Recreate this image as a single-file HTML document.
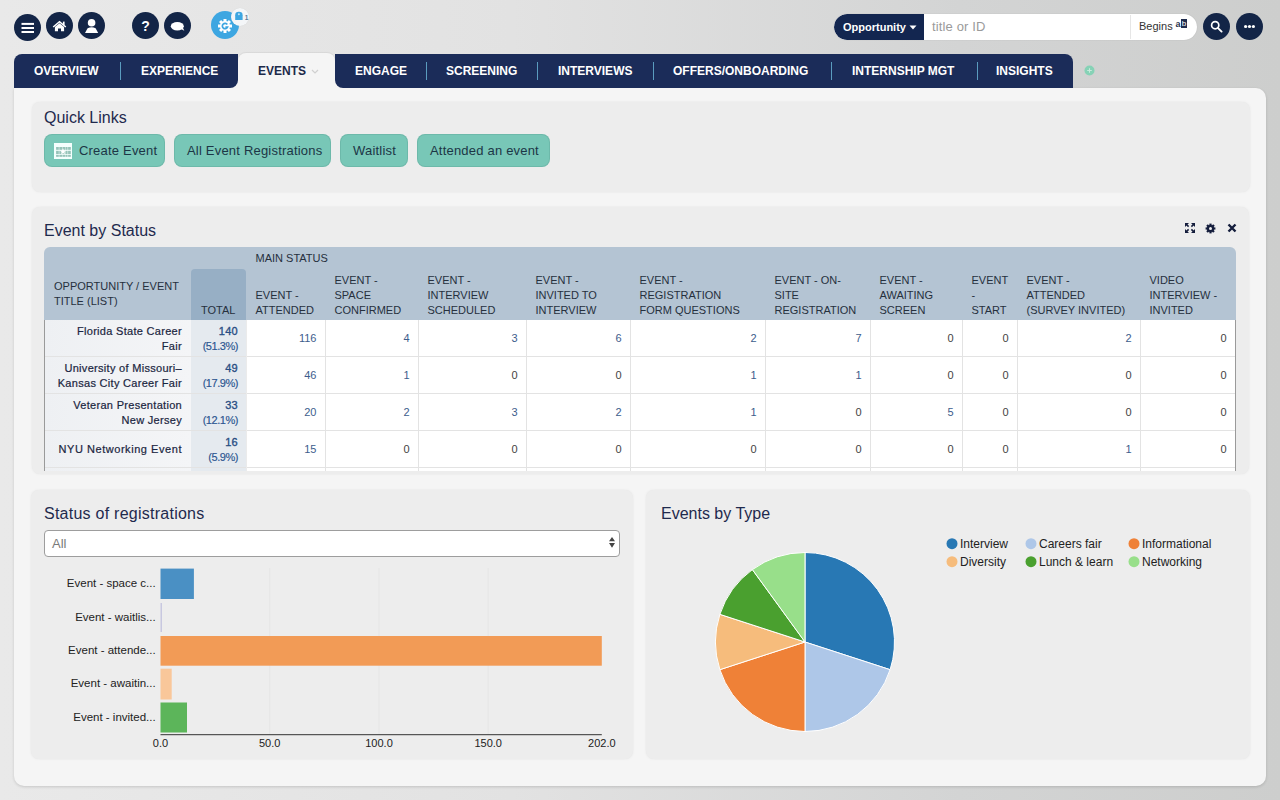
<!DOCTYPE html>
<html><head><meta charset="utf-8">
<style>
*{box-sizing:border-box;margin:0;padding:0}
html,body{width:1280px;height:800px;overflow:hidden}
body{font-family:"Liberation Sans",sans-serif;background:linear-gradient(to right,#e9e9e9 0%,#e2e2e2 40%,#d3d4d4 75%,#cdcecd 100%);position:relative;color:#1c2a4a}
.abs{position:absolute}
.circ{position:absolute;width:27px;height:27px;border-radius:50%;background:#132547}
#main{position:absolute;left:14px;top:88px;width:1252px;height:698px;background:#f5f5f5;border-radius:0 10px 10px 10px;box-shadow:0 1px 3px rgba(0,0,0,.15)}
.panel{position:absolute;background:#ededed;border-radius:8px;box-shadow:0 0 2px 0 rgba(225,225,225,.9)}
.ptitle{position:absolute;font-size:16px;color:#1f2a4d;white-space:nowrap}
/* tabs */
.tabgrp{position:absolute;top:53.75px;height:34.25px;background:#1b2c59}
.tab{position:absolute;top:0;height:35px;line-height:37px;color:#fff;font-size:12px;font-weight:700;white-space:nowrap}
.sep{position:absolute;top:9px;width:1px;height:18px;background:#5a9cbf}
.qbtn{position:absolute;top:134px;height:33px;background:#78c7b7;border-radius:8px;box-shadow:inset 0 0 0 1px rgba(60,120,110,.18)}
.qtxt{position:absolute;top:134px;height:33px;line-height:33px;font-size:13px;color:#1c3646;white-space:nowrap;letter-spacing:0.2px}
.th{position:absolute;font-size:11px;line-height:15px;color:#26303d;white-space:nowrap}
.td{position:absolute;font-size:11px;white-space:nowrap;text-align:right}
.name{color:#1a2540;letter-spacing:0.3px;-webkit-text-stroke:0.2px #1a2540}
.tot{color:#2b5590;line-height:15px;margin-right:-1px;letter-spacing:-0.45px;-webkit-text-stroke:0.15px #2b5590}
.tot b{letter-spacing:0.3px;font-weight:400;-webkit-text-stroke:0.35px #27497a}
.num{color:#3d5d8c;line-height:15px}
.num.z{color:#444}
</style></head>
<body>
<!-- top icons -->
<div class="circ" style="left:14px;top:14px"><svg width="27" height="27" viewBox="0 0 27 27"><rect x="7.5" y="8.9" width="12.5" height="2" fill="#fff"/><rect x="7.5" y="13" width="12.5" height="2" fill="#fff"/><rect x="7.5" y="17" width="12.5" height="2" fill="#fff"/></svg></div>
<div class="circ" style="left:46px;top:12px"><svg width="27" height="27" viewBox="0 0 27 27"><path d="M7.2 15 L13.5 9.7 L19.8 15" stroke="#fff" stroke-width="1.5" fill="none"/><rect x="16.9" y="9.6" width="1.7" height="3.4" fill="#fff"/><path d="M8.9 14.9 L13.5 11.2 L18.1 14.9 V19.3 H15 V16.4 H12 V19.3 H8.9 Z" fill="#fff"/></svg></div>
<div class="circ" style="left:78px;top:12px"><svg width="27" height="27" viewBox="0 0 27 27"><circle cx="13.6" cy="10.7" r="3.8" fill="#fff"/><path d="M7 21 L9.6 16.3 Q13.6 14 17.6 16.3 L20.2 21 Z" fill="#fff"/></svg></div>
<div class="circ" style="left:132px;top:12px"><svg width="27" height="27" viewBox="0 0 27 27"><text x="13.6" y="19.2" text-anchor="middle" font-family="Liberation Sans" font-weight="700" font-size="14" fill="#fff">?</text></svg></div>
<div class="circ" style="left:164px;top:12px"><svg width="27" height="27" viewBox="0 0 27 27"><ellipse cx="13.3" cy="14.3" rx="6.5" ry="4.2" fill="#fff"/><path d="M16 16.5 L20.3 18.8 L18.6 15 Z" fill="#fff"/></svg></div>
<div class="circ" style="left:211px;top:11px;width:28px;height:28px;background:#3da6e1"><svg width="28" height="28" viewBox="0 0 28 28"><g transform="translate(14 15)"><g fill="#fff"><circle r="5"/><rect x="-1.5" y="-7" width="3" height="14"/><rect x="-1.5" y="-7" width="3" height="14" transform="rotate(45)"/><rect x="-1.5" y="-7" width="3" height="14" transform="rotate(90)"/><rect x="-1.5" y="-7" width="3" height="14" transform="rotate(135)"/></g><path d="M2.3 -1.5 A2.7 2.7 0 1 0 2.5 1.1 H0.4" stroke="#3da6e1" stroke-width="1.7" fill="none"/></g></svg></div>
<div class="abs" style="left:231px;top:8px;width:18px;height:18px;border-radius:50%;background:#f4f6f8;box-shadow:0 0 1px rgba(0,0,0,.1)"><svg width="18" height="18" viewBox="0 0 18 18"><path d="M4.2 8 V7 A3.7 3.2 0 0 1 11.6 7 V8 Z" fill="#3da6e1"/><rect x="4.2" y="7.6" width="7.4" height="4.4" fill="#3da6e1"/><circle cx="7.9" cy="6.3" r="1" fill="#bfe2f6"/><text x="15.5" y="11.6" text-anchor="middle" font-family="Liberation Sans" font-size="6.5" fill="#5a7a96" font-weight="700">1</text></svg></div>

<!-- search -->
<div class="abs" style="left:834px;top:14px;width:363px;height:26px;border-radius:13px;background:#fff;overflow:hidden;box-shadow:0 0 1px rgba(0,0,0,.2)">
  <div class="abs" style="left:0;top:0;width:90px;height:26px;background:#132650;border-radius:13px 0 0 13px"></div>
  <div class="abs" style="left:9px;top:0;height:26px;line-height:26px;font-size:11px;font-weight:700;color:#fff;white-space:nowrap">Opportunity</div>
  <svg class="abs" style="left:75px;top:11px" width="8" height="5" viewBox="0 0 8 5"><path d="M0.5 0.5 H7.5 L4 4.5 Z" fill="#fff"/></svg>
  <div class="abs" style="left:98px;top:0;height:26px;line-height:26px;font-size:13px;color:#9a9a9a;white-space:nowrap;letter-spacing:0.15px">title or ID</div>
  <div class="abs" style="left:296px;top:1px;width:1px;height:24px;background:#e6e6e6"></div>
  <div class="abs" style="left:305px;top:-1px;height:26px;line-height:26px;font-size:11px;color:#333;white-space:nowrap">Begins</div>
  <div class="abs" style="left:341.5px;top:6px;font-size:9px;line-height:9px;color:#2a3550;font-weight:700;white-space:nowrap">a</div>
  <div class="abs" style="left:347px;top:5px;width:6px;height:9px;background:#1f2c4d;color:#fff;font-size:8px;line-height:9px;text-align:center">b</div>
</div>
<div class="circ" style="left:1203px;top:13px"><svg width="27" height="27" viewBox="0 0 27 27"><circle cx="12.2" cy="12.2" r="3.6" stroke="#fff" stroke-width="1.7" fill="none"/><path d="M14.8 14.8 L18.6 18.6" stroke="#fff" stroke-width="1.9" stroke-linecap="round"/></svg></div>
<div class="circ" style="left:1236px;top:13px"><svg width="27" height="27" viewBox="0 0 27 27"><circle cx="9.6" cy="13.5" r="1.6" fill="#fff"/><circle cx="13.5" cy="13.5" r="1.6" fill="#fff"/><circle cx="17.4" cy="13.5" r="1.6" fill="#fff"/></svg></div>

<!-- main -->
<div id="main"></div>

<!-- tabs -->
<div class="abs" style="left:226px;top:72px;width:120px;height:17px;background:#f5f5f5"></div>
<div class="tabgrp" style="left:14px;width:224px;border-radius:8px 0 8px 0"></div>
<div class="abs" style="left:238px;top:53px;width:97px;height:36px;background:#f5f5f5;border-radius:8px 8px 0 0;box-shadow:0 -1px 1px rgba(0,0,0,.06)"></div>
<div class="tabgrp" style="left:335px;width:738px;border-radius:0 8px 0 8px"></div>
<div class="tab" style="left:34px;top:53px">OVERVIEW</div>
<div class="sep" style="left:120px;top:62px"></div>
<div class="tab" style="left:141px;top:53px">EXPERIENCE</div>
<div class="tab" style="left:258px;top:53px;color:#1c2a4a">EVENTS</div>
<svg class="abs" style="left:311px;top:69px" width="8" height="5" viewBox="0 0 8 5"><path d="M1 1 L4 4 L7 1" stroke="#d0d0d0" stroke-width="1.2" fill="none"/></svg>
<div class="tab" style="left:355px;top:53px">ENGAGE</div>
<div class="sep" style="left:426px;top:62px"></div>
<div class="tab" style="left:446px;top:53px">SCREENING</div>
<div class="sep" style="left:537px;top:62px"></div>
<div class="tab" style="left:558px;top:53px">INTERVIEWS</div>
<div class="sep" style="left:653px;top:62px"></div>
<div class="tab" style="left:673px;top:53px">OFFERS/ONBOARDING</div>
<div class="sep" style="left:831px;top:62px"></div>
<div class="tab" style="left:852px;top:53px">INTERNSHIP MGT</div>
<div class="sep" style="left:977px;top:62px"></div>
<div class="tab" style="left:996px;top:53px">INSIGHTS</div>
<svg class="abs" style="left:1084px;top:65px" width="11" height="11" viewBox="0 0 11 11"><circle cx="5.5" cy="5.5" r="5" fill="#86d2b6"/><path d="M5.5 3.2 V7.8 M3.2 5.5 H7.8" stroke="#c8eadc" stroke-width="1.1"/></svg>

<div class="panel" style="left:32px;top:102px;width:1218px;height:90px"></div>
<div class="ptitle" style="left:44px;top:108px;line-height:20px">Quick Links</div>
<div class="qbtn" style="left:44px;width:121px"></div><div class="qtxt" style="left:79px">Create Event</div>
<div class="qbtn" style="left:174px;width:157px"></div><div class="qtxt" style="left:187px">All Event Registrations</div>
<div class="qbtn" style="left:340px;width:68px"></div><div class="qtxt" style="left:353px">Waitlist</div>
<div class="qbtn" style="left:417px;width:133px"></div><div class="qtxt" style="left:430px">Attended an event</div>
<svg class="abs" style="left:54px;top:143px" width="18" height="16" viewBox="0 0 18 16"><rect x="0" y="0" width="18" height="16" fill="#f4fffd"/><g fill="#96c3b8"><rect x="2.1" y="4" width="2.7" height="2.8"/><rect x="2.1" y="7.8" width="2.7" height="3.2"/><rect x="2.1" y="11.8" width="2.7" height="2.0"/><rect x="5.3" y="4" width="2.7" height="2.8"/><rect x="5.3" y="7.8" width="2.7" height="3.2"/><rect x="5.3" y="11.8" width="2.7" height="2.0"/><rect x="8.4" y="4" width="2.6" height="2.8"/><rect x="8.4" y="7.8" width="2.6" height="3.2"/><rect x="8.4" y="11.8" width="2.6" height="2.0"/><rect x="11.4" y="4" width="2.2" height="2.8"/><rect x="11.4" y="7.8" width="2.2" height="3.2"/><rect x="11.4" y="11.8" width="2.2" height="2.0"/><rect x="14.1" y="4" width="2.7" height="2.8"/><rect x="14.1" y="7.8" width="2.7" height="3.2"/><rect x="14.1" y="11.8" width="2.7" height="2.0"/></g><polygon points="9.00,5.30 9.88,7.39 12.14,7.58 10.43,9.06 10.94,11.27 9.00,10.10 7.06,11.27 7.57,9.06 5.86,7.58 8.12,7.39" fill="#fff"/></svg>
<div class="panel" style="left:32px;top:207px;width:1217px;height:267px"></div>
<div class="ptitle" style="left:44px;top:221px;line-height:20px">Event by Status</div>
<svg class="abs" style="left:1184px;top:222px" width="12" height="12" viewBox="0 0 12 12"><g fill="#141d3c"><path d="M1 1 H5 L1 5 Z M11 1 V5 L7 1 Z M11 11 H7 L11 7 Z M1 11 V7 L5 11 Z"/></g><g stroke="#141d3c" stroke-width="1.5"><path d="M2 2 L4.6 4.6 M10 2 L7.4 4.6 M10 10 L7.4 7.4 M2 10 L4.6 7.4"/></g></svg>
<svg class="abs" style="left:1205px;top:222.5px" width="11" height="11" viewBox="0 0 11 11"><g transform="translate(5.5 5.5)" fill="#141d3c"><circle r="3.6"/><rect x="-1.1" y="-4.9" width="2.2" height="9.8"/><rect x="-1.1" y="-4.9" width="2.2" height="9.8" transform="rotate(45)"/><rect x="-1.1" y="-4.9" width="2.2" height="9.8" transform="rotate(90)"/><rect x="-1.1" y="-4.9" width="2.2" height="9.8" transform="rotate(135)"/></g><circle cx="5.5" cy="5.5" r="1.5" fill="#ededed"/></svg>
<svg class="abs" style="left:1227px;top:223px" width="10" height="10" viewBox="0 0 10 10"><path d="M1.5 1.5 L8.5 8.5 M8.5 1.5 L1.5 8.5" stroke="#141d3c" stroke-width="2.4"/></svg>
<div class="abs" style="left:44px;top:247px;width:1192px;height:224px;overflow:hidden;border-radius:6px 6px 0 0">
<div class="abs" style="left:0;top:0;width:1192px;height:73px;background:#b4c4d3"></div>
<div class="abs" style="left:147px;top:22px;width:55px;height:51px;background:#97afc5;border-radius:4px 4px 0 0"></div>
<div class="abs" style="left:0;top:73px;width:1192px;height:151px;background:#fff"></div>
<div class="abs" style="left:0;top:73px;width:147px;height:151px;background:linear-gradient(to right,#eef0f3,#f4f5f7)"></div>
<div class="abs" style="left:147px;top:73px;width:55px;height:151px;background:#e5eaef"></div>
<div class="th" style="left:10px;top:32px">OPPORTUNITY / EVENT<br>TITLE (LIST)</div>
<div class="th" style="left:157px;top:56px">TOTAL</div>
<div class="th" style="left:211.5px;top:4px">MAIN STATUS</div>
<div class="th" style="left:211.5px;top:41px">EVENT -<br>ATTENDED</div>
<div class="th" style="left:290.5px;top:26px">EVENT -<br>SPACE<br>CONFIRMED</div>
<div class="th" style="left:383.5px;top:26px">EVENT -<br>INTERVIEW<br>SCHEDULED</div>
<div class="th" style="left:491.5px;top:26px">EVENT -<br>INVITED TO<br>INTERVIEW</div>
<div class="th" style="left:595.5px;top:26px">EVENT -<br>REGISTRATION<br>FORM QUESTIONS</div>
<div class="th" style="left:730.5px;top:26px">EVENT - ON-<br>SITE<br>REGISTRATION</div>
<div class="th" style="left:835.5px;top:26px">EVENT -<br>AWAITING<br>SCREEN</div>
<div class="th" style="left:927.5px;top:26px">EVENT<br>-<br>START</div>
<div class="th" style="left:982.5px;top:26px">EVENT -<br>ATTENDED<br>(SURVEY INVITED)</div>
<div class="th" style="left:1105.5px;top:26px">VIDEO<br>INTERVIEW -<br>INVITED</div>
<div class="abs" style="left:0;top:109px;width:1192px;height:1px;background:#e3e3e3"></div>
<div class="td name" style="right:1054px;top:73px;line-height:15px;padding-top:3.5px">Florida State Career<br>Fair</div>
<div class="td tot" style="right:999px;top:73px;padding-top:3.5px"><b>140</b><br>(51.3%)</div>
<div class="td num" style="right:919.5px;top:84px">116</div>
<div class="td num" style="right:826.5px;top:84px">4</div>
<div class="td num" style="right:718.5px;top:84px">3</div>
<div class="td num" style="right:614.5px;top:84px">6</div>
<div class="td num" style="right:479.5px;top:84px">2</div>
<div class="td num" style="right:374.5px;top:84px">7</div>
<div class="td num z" style="right:282.5px;top:84px">0</div>
<div class="td num z" style="right:227.5px;top:84px">0</div>
<div class="td num" style="right:104.5px;top:84px">2</div>
<div class="td num z" style="right:9.5px;top:84px">0</div>
<div class="abs" style="left:0;top:146px;width:1192px;height:1px;background:#e3e3e3"></div>
<div class="td name" style="right:1054px;top:110px;line-height:15px;padding-top:3.5px">University of Missouri–<br>Kansas City Career Fair</div>
<div class="td tot" style="right:999px;top:110px;padding-top:3.5px"><b>49</b><br>(17.9%)</div>
<div class="td num" style="right:919.5px;top:121px">46</div>
<div class="td num" style="right:826.5px;top:121px">1</div>
<div class="td num z" style="right:718.5px;top:121px">0</div>
<div class="td num z" style="right:614.5px;top:121px">0</div>
<div class="td num" style="right:479.5px;top:121px">1</div>
<div class="td num" style="right:374.5px;top:121px">1</div>
<div class="td num z" style="right:282.5px;top:121px">0</div>
<div class="td num z" style="right:227.5px;top:121px">0</div>
<div class="td num z" style="right:104.5px;top:121px">0</div>
<div class="td num z" style="right:9.5px;top:121px">0</div>
<div class="abs" style="left:0;top:183px;width:1192px;height:1px;background:#e3e3e3"></div>
<div class="td name" style="right:1054px;top:147px;line-height:15px;padding-top:3.5px">Veteran Presentation<br>New Jersey</div>
<div class="td tot" style="right:999px;top:147px;padding-top:3.5px"><b>33</b><br>(12.1%)</div>
<div class="td num" style="right:919.5px;top:158px">20</div>
<div class="td num" style="right:826.5px;top:158px">2</div>
<div class="td num" style="right:718.5px;top:158px">3</div>
<div class="td num" style="right:614.5px;top:158px">2</div>
<div class="td num" style="right:479.5px;top:158px">1</div>
<div class="td num z" style="right:374.5px;top:158px">0</div>
<div class="td num" style="right:282.5px;top:158px">5</div>
<div class="td num z" style="right:227.5px;top:158px">0</div>
<div class="td num z" style="right:104.5px;top:158px">0</div>
<div class="td num z" style="right:9.5px;top:158px">0</div>
<div class="abs" style="left:0;top:220px;width:1192px;height:1px;background:#e3e3e3"></div>
<div class="td name" style="right:1054px;top:184px;line-height:15px;padding-top:11px;letter-spacing:0.55px">NYU Networking Event</div>
<div class="td tot" style="right:999px;top:184px;padding-top:3.5px"><b>16</b><br>(5.9%)</div>
<div class="td num" style="right:919.5px;top:195px">15</div>
<div class="td num z" style="right:826.5px;top:195px">0</div>
<div class="td num z" style="right:718.5px;top:195px">0</div>
<div class="td num z" style="right:614.5px;top:195px">0</div>
<div class="td num z" style="right:479.5px;top:195px">0</div>
<div class="td num z" style="right:374.5px;top:195px">0</div>
<div class="td num z" style="right:282.5px;top:195px">0</div>
<div class="td num z" style="right:227.5px;top:195px">0</div>
<div class="td num" style="right:104.5px;top:195px">1</div>
<div class="td num z" style="right:9.5px;top:195px">0</div>
<div class="abs" style="left:281px;top:73px;width:1px;height:151px;background:#e3e3e3"></div>
<div class="abs" style="left:374px;top:73px;width:1px;height:151px;background:#e3e3e3"></div>
<div class="abs" style="left:482px;top:73px;width:1px;height:151px;background:#e3e3e3"></div>
<div class="abs" style="left:586px;top:73px;width:1px;height:151px;background:#e3e3e3"></div>
<div class="abs" style="left:721px;top:73px;width:1px;height:151px;background:#e3e3e3"></div>
<div class="abs" style="left:826px;top:73px;width:1px;height:151px;background:#e3e3e3"></div>
<div class="abs" style="left:918px;top:73px;width:1px;height:151px;background:#e3e3e3"></div>
<div class="abs" style="left:973px;top:73px;width:1px;height:151px;background:#e3e3e3"></div>
<div class="abs" style="left:1096px;top:73px;width:1px;height:151px;background:#e3e3e3"></div>
<div class="abs" style="left:202px;top:73px;width:1px;height:151px;background:#ebebeb"></div>
<div class="abs" style="left:0;top:73px;width:1px;height:151px;background:#9a9a9a"></div>
<div class="abs" style="left:1191px;top:73px;width:1px;height:151px;background:#9a9a9a"></div>
</div>
<div class="panel" style="left:31px;top:490px;width:602px;height:269px"></div>
<div class="panel" style="left:646px;top:490px;width:604px;height:269px"></div>
<div class="ptitle" style="left:44px;top:503.5px;line-height:20px;letter-spacing:0.25px">Status of registrations</div>
<div class="ptitle" style="left:661px;top:503.5px;line-height:20px">Events by Type</div>
<div class="abs" style="left:44px;top:530px;width:576px;height:27px;background:#fff;border:1px solid #9d9d9d;border-radius:4px"></div>
<div class="abs" style="left:52px;top:530px;height:27px;line-height:27px;font-size:13px;color:#7a7a7a">All</div>
<svg class="abs" style="left:608px;top:536px" width="8" height="13" viewBox="0 0 8 13"><path d="M1 5.3 L4 1 L7 5.3 Z M1 7 L7 7 L4 11.8 Z" fill="#444"/></svg>
<svg class="abs" style="left:0;top:0" width="640" height="800" viewBox="0 0 640 800">
<line x1="269.7" y1="568" x2="269.7" y2="734" stroke="#e5e5e5" stroke-width="1"/>
<line x1="379.0" y1="568" x2="379.0" y2="734" stroke="#e5e5e5" stroke-width="1"/>
<line x1="488.2" y1="568" x2="488.2" y2="734" stroke="#e5e5e5" stroke-width="1"/>
<rect x="160.5" y="568.6" width="33.4" height="30.4" fill="#4a90c4"/>
<text x="155.7" y="587.1" text-anchor="end" font-family="Liberation Sans" font-size="11.5" fill="#222">Event - space c...</text>
<rect x="160.5" y="603" width="1.5" height="29.0" fill="#c8c8e0"/>
<text x="155.7" y="620.8" text-anchor="end" font-family="Liberation Sans" font-size="11.5" fill="#222">Event - waitlis...</text>
<rect x="160.5" y="636" width="441.3" height="29.7" fill="#f29b56"/>
<text x="155.7" y="654.1" text-anchor="end" font-family="Liberation Sans" font-size="11.5" fill="#222">Event - attende...</text>
<rect x="160.5" y="668.7" width="11.2" height="30.8" fill="#f9c79a"/>
<text x="155.7" y="687.4" text-anchor="end" font-family="Liberation Sans" font-size="11.5" fill="#222">Event - awaitin...</text>
<rect x="160.5" y="702.5" width="26.5" height="30.0" fill="#5cb55a"/>
<text x="155.7" y="720.8" text-anchor="end" font-family="Liberation Sans" font-size="11.5" fill="#222">Event - invited...</text>
<line x1="160.5" y1="734.7" x2="601.8" y2="734.7" stroke="#333" stroke-width="1"/>
<text x="160.5" y="746.5" text-anchor="middle" font-family="Liberation Sans" font-size="11" fill="#222">0.0</text>
<text x="269.7" y="746.5" text-anchor="middle" font-family="Liberation Sans" font-size="11" fill="#222">50.0</text>
<text x="379.0" y="746.5" text-anchor="middle" font-family="Liberation Sans" font-size="11" fill="#222">100.0</text>
<text x="488.2" y="746.5" text-anchor="middle" font-family="Liberation Sans" font-size="11" fill="#222">150.0</text>
<text x="601.8" y="746.5" text-anchor="middle" font-family="Liberation Sans" font-size="11" fill="#222">202.0</text>
</svg>
<svg class="abs" style="left:640px;top:480px" width="640" height="320" viewBox="640 480 640 320">
<path d="M805 642 L805.00 552.50 A89.5 89.5 0 0 1 890.12 669.66 Z" fill="#2878b4" stroke="#fff" stroke-width="1"/>
<path d="M805 642 L890.12 669.66 A89.5 89.5 0 0 1 805.00 731.50 Z" fill="#aec7e8" stroke="#fff" stroke-width="1"/>
<path d="M805 642 L805.00 731.50 A89.5 89.5 0 0 1 719.88 669.66 Z" fill="#ef8137" stroke="#fff" stroke-width="1"/>
<path d="M805 642 L719.88 669.66 A89.5 89.5 0 0 1 719.88 614.34 Z" fill="#f6bc7c" stroke="#fff" stroke-width="1"/>
<path d="M805 642 L719.88 614.34 A89.5 89.5 0 0 1 752.39 569.59 Z" fill="#4aa02f" stroke="#fff" stroke-width="1"/>
<path d="M805 642 L752.39 569.59 A89.5 89.5 0 0 1 805.00 552.50 Z" fill="#98df8a" stroke="#fff" stroke-width="1"/>
<circle cx="952" cy="543.7" r="5.5" fill="#2878b4"/>
<text x="960" y="547.9" font-family="Liberation Sans" font-size="12" fill="#222">Interview</text>
<circle cx="1031" cy="543.7" r="5.5" fill="#aec7e8"/>
<text x="1039" y="547.9" font-family="Liberation Sans" font-size="12" fill="#222">Careers fair</text>
<circle cx="1134" cy="543.7" r="5.5" fill="#ef8137"/>
<text x="1142" y="547.9" font-family="Liberation Sans" font-size="12" fill="#222">Informational</text>
<circle cx="952" cy="561.7" r="5.5" fill="#f6bc7c"/>
<text x="960" y="565.9" font-family="Liberation Sans" font-size="12" fill="#222">Diversity</text>
<circle cx="1031" cy="561.7" r="5.5" fill="#4aa02f"/>
<text x="1039" y="565.9" font-family="Liberation Sans" font-size="12" fill="#222">Lunch &amp; learn</text>
<circle cx="1134" cy="561.7" r="5.5" fill="#98df8a"/>
<text x="1142" y="565.9" font-family="Liberation Sans" font-size="12" fill="#222">Networking</text>
</svg>
</body></html>
